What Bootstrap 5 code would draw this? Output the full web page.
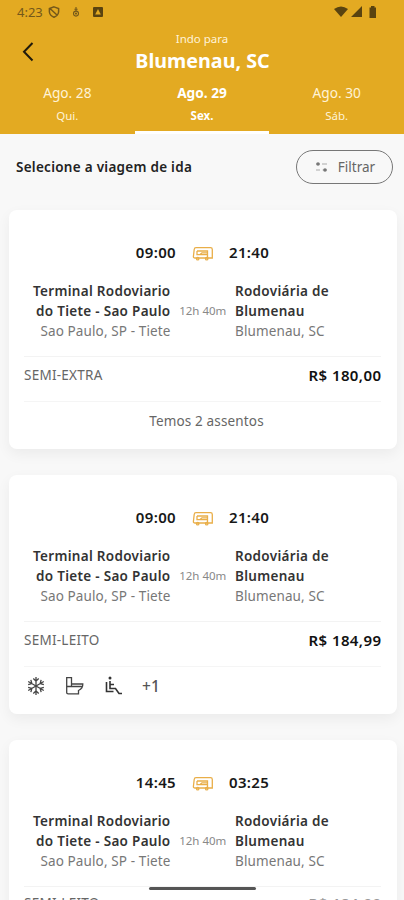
<!DOCTYPE html>
<html lang="pt-BR">
<head>
<meta charset="utf-8">
<meta name="viewport" content="width=device-width, initial-scale=1">
<title>Selecione a viagem</title>
<link href="https://cdn.jsdelivr.net/npm/bootstrap@5.3.0/dist/css/bootstrap.min.css" rel="stylesheet">
<style>
body{font-family:"Noto Sans",sans-serif;background:#f8f8f8;color:#222;height:900px;overflow:hidden;font-size:13.5px;line-height:20px}
.screen{height:900px;overflow:hidden}
.top-area{background:#e3aa22;height:134px;color:#fff}
.status{height:24px;padding:0 25px 0 17px;color:#74581a;font-size:13px}
.title-bar{height:58px;display:grid;grid-template-columns:56px 1fr 56px}
.t-sub{font-size:11.5px;line-height:14px;padding-top:8px;color:#fff3d8}
.t-main{font-size:19.7px;line-height:26px;font-weight:700;margin-top:2px;padding-left:1px}
.days{height:52px}
.day{border-radius:0!important;padding:2px 0 0!important;color:#fff3d6!important;font-size:13.7px;line-height:18px;border-bottom:3px solid transparent!important}
.day small{display:block;font-size:11.5px;line-height:14px;margin-top:7px}
.day.active{background:none!important;color:#fff!important;font-weight:700;border-bottom-color:#fff!important}
.filter-row{height:76px;padding:16px 11px 0 16px}
.filter-row h1{font-size:13.5px;line-height:34px;font-weight:600;letter-spacing:.27px}
.filter-btn{width:97px;height:34px;border:1px solid #777;color:#666;font-size:13.5px;padding:0}
.trip{margin:0 7px 26.5px 8.5px;height:238.5px;border:0;border-radius:8px;background:#fff;box-shadow:0 5px 14px rgba(0,0,0,.055);padding:31px 16px 0 15.5px}
.hours{display:grid;grid-template-columns:152px 53px 1fr;font-size:15px;line-height:22px;font-weight:600;color:#181818;letter-spacing:.35px}
.places{display:grid;grid-template-columns:146.5px 64.5px 1fr;margin-top:17.5px;height:75.5px;line-height:20px;color:#333}
.places b{letter-spacing:.3px}
.city{color:#777;letter-spacing:.12px}
.dur{font-size:11.5px;color:#888;padding-top:20px}
.fare{border-top:1px solid #f3f3f3;height:45px;padding-top:8px;line-height:20px;color:#666}
.trip:last-child .fare{padding-top:5.5px}
.trip:last-child .price{color:#999}
.service{letter-spacing:.25px}
.price{font-size:15px;font-weight:600;color:#111;letter-spacing:.4px;margin-right:-.4px}
.foot{border-top:1px solid #f5f5f5;height:38px;color:#666;letter-spacing:.15px}
.seats{padding-left:8px}
.more{font-size:15.5px;font-weight:500;color:#555;margin-left:17px}
.home-bar{left:149px;bottom:10px;width:107px;height:3px;background:#555;border-radius:2px}
</style>
<script src="https://cdn.jsdelivr.net/npm/bootstrap@5.3.0/dist/js/bootstrap.bundle.min.js"></script>
</head>
<body>
<svg class="d-none">
<symbol id="bus" viewBox="0 0 22 16"><g fill="none" stroke="#e9ae48" stroke-width="1.3"><path d="M4 1.700H18.500Q20.300 1.700 20.300 3.500V12H3Q1.300 12 1.400 10.500L2.200 3.500Q2.400 1.700 4 1.700Z"/><path d="M5 5H15.500V12M5 5V8.700H15M8 8.500 10 6.800H15"/><circle cx="5.700" cy="12.700" r="1.200"/><circle cx="14.700" cy="12.700" r="1.200"/></g></symbol>
</svg>
<div class="screen position-relative">
<header class="top-area">
 <div class="status d-flex align-items-center">
  <span>4:23</span>
  <svg width="12" height="12" style="margin-left:5px" viewBox="0 0 12 12" fill="none" stroke="#74581a" stroke-width="1.500"><path d="M6 .9 10.600 2.500V6Q10.200 9.500 6 11.200 1.800 9.500 1.400 6V2.500ZM2 2.500 9.500 9.500"/></svg>
  <svg width="10" height="12" viewBox="0 0 10 12" style="margin-left:11px" fill="none" stroke="#74581a" stroke-width="1.100"><path d="M5 1V5M3.400 3.200H6.600"/><circle cx="5" cy="7.600" r="2.500"/><circle cx="5" cy="7.600" r=".5"/></svg>
  <svg width="10" height="10" viewBox="0 0 10 10" style="margin-left:12px"><rect width="10" height="10" rx="1" fill="#5a4310"/><path d="M5 2 7.800 7.400H2.200Z" fill="#e3aa22"/></svg>
  <svg class="ms-auto" width="46" height="14" viewBox="0 0 46 14" fill="#594310"><path d="M1 4Q8 -1 15 4L8 12ZM29 1V12H18ZM36.500 2.500H38V1H41.500V2.500H43V13H36.500Z"/></svg>
 </div>
 <div class="title-bar">
  <svg class="ms-3 mt-3" width="24" height="24" viewBox="0 0 24 24" fill="none" stroke="#211b0c" stroke-width="2"><path d="M16.500 3 8 11.700 16.500 20.500"/></svg>
  <div class="text-center text-nowrap"><div class="t-sub">Indo para</div><div class="t-main">Blumenau, SC</div></div>
 </div>
 <nav class="nav nav-pills nav-fill days flex-nowrap">
  <a class="nav-link day w-100">Ago. 28<small>Qui.</small></a>
  <a class="nav-link day active w-100">Ago. 29<small>Sex.</small></a>
  <a class="nav-link day w-100">Ago. 30<small>Sáb.</small></a>
 </nav>
</header>
<main>
 <div class="filter-row d-flex justify-content-between align-items-start">
  <h1 class="mb-0">Selecione a viagem de ida</h1>
  <button class="btn filter-btn rounded-pill d-flex align-items-center justify-content-center"><svg class="me-1" width="16" height="12" viewBox="0 0 16 12"><path d="M8 3H13M2 9H6" stroke="#aaa" stroke-width="1.200"/><path d="M2 3H6M8.500 9H13" stroke="#bbb" stroke-width="1"/><circle cx="4" cy="3" r="1.800" fill="#777"/><circle cx="11" cy="9" r="1.800" fill="#777"/></svg><span class="ms-1">Filtrar</span></button>
 </div>
 <article class="trip card">
  <div class="hours"><span class="text-end">09:00</span><span class="text-center"><svg width="22" height="16"><use href="#bus"/></svg></span><span>21:40</span></div>
  <div class="places"><div class="text-end text-nowrap"><b class="fw-semibold">Terminal Rodoviario<br>do Tiete - Sao Paulo</b><div class="city">Sao Paulo, SP - Tiete</div></div><div class="dur text-center">12h 40m</div><div><b class="fw-semibold">Rodoviária de<br>Blumenau</b><div class="city">Blumenau, SC</div></div></div>
  <div class="fare d-flex justify-content-between"><span class="service">SEMI-EXTRA</span><span class="price">R$ 180,00</span></div>
  <div class="foot seats d-flex align-items-center justify-content-center">Temos 2 assentos</div>
 </article>
 <article class="trip card">
  <div class="hours"><span class="text-end">09:00</span><span class="text-center"><svg width="22" height="16"><use href="#bus"/></svg></span><span>21:40</span></div>
  <div class="places"><div class="text-end text-nowrap"><b class="fw-semibold">Terminal Rodoviario<br>do Tiete - Sao Paulo</b><div class="city">Sao Paulo, SP - Tiete</div></div><div class="dur text-center">12h 40m</div><div><b class="fw-semibold">Rodoviária de<br>Blumenau</b><div class="city">Blumenau, SC</div></div></div>
  <div class="fare d-flex justify-content-between"><span class="service">SEMI-LEITO</span><span class="price">R$ 184,99</span></div>
  <div class="foot d-flex align-items-center">
   <svg style="margin-left:2px" width="20" height="20" viewBox="0 0 20 20" fill="none" stroke="#444" stroke-width="1.300"><g id="arm"><path d="M10 1V19M7.300 2.500 10 5.200 12.700 2.500M7.300 17.500 10 14.800 12.700 17.500"/></g><use href="#arm" transform="rotate(60 10 10)"/><use href="#arm" transform="rotate(120 10 10)"/></svg>
   <svg style="margin-left:19px" width="20" height="20" viewBox="0 0 20 20" fill="none" stroke="#444" stroke-width="1.300"><path d="M1.700 16.500V1.700H6.500V8H17.800Q18 12.500 13.500 14.500V17.800H3.200Q1.700 17.800 1.700 16.500ZM2 10.500H6.500L6.500 8M6.500 10.500H17"/></svg>
   <svg style="margin-left:20px" width="20" height="20" viewBox="0 0 20 20" fill="none" stroke="#333" stroke-width="1.600"><circle cx="5" cy="2" r="1.500" fill="#333" stroke="none"/><path d="M5 5V12.500H10.500L14 17.500H17M5.500 8.500H9M1.500 6V15.500H8.500"/></svg>
   <span class="more">+1</span>
  </div>
 </article>
 <article class="trip card">
  <div class="hours"><span class="text-end">14:45</span><span class="text-center"><svg width="22" height="16"><use href="#bus"/></svg></span><span>03:25</span></div>
  <div class="places"><div class="text-end text-nowrap"><b class="fw-semibold">Terminal Rodoviario<br>do Tiete - Sao Paulo</b><div class="city">Sao Paulo, SP - Tiete</div></div><div class="dur text-center">12h 40m</div><div><b class="fw-semibold">Rodoviária de<br>Blumenau</b><div class="city">Blumenau, SC</div></div></div>
  <div class="fare d-flex justify-content-between"><span class="service">SEMI-LEITO</span><span class="price">R$ 184,99</span></div>
 </article>
</main>
<div class="home-bar position-absolute"></div>
</div>
</body>
</html>
